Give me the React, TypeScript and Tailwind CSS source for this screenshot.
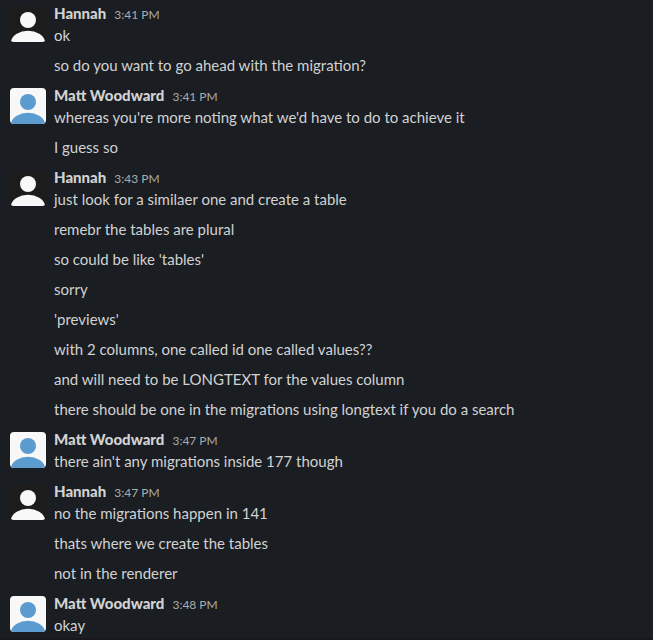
type Group = { author: string; time: string; lines: string[] };

const groups: Group[] = [
  { author: "Hannah", time: "3:41 PM", lines: ["ok", "so do you want to go ahead with the migration?"] },
  { author: "Matt Woodward", time: "3:41 PM", lines: ["whereas you're more noting what we'd have to do to achieve it", "I guess so"] },
  {
    author: "Hannah",
    time: "3:43 PM",
    lines: [
      "just look for a similaer one and create a table",
      "remebr the tables are plural",
      "so could be like 'tables'",
      "sorry",
      "'previews'",
      "with 2 columns, one called id one called values??",
      "and will need to be LONGTEXT for the values column",
      "there should be one in the migrations using longtext if you do a search",
    ],
  },
  { author: "Matt Woodward", time: "3:47 PM", lines: ["there ain't any migrations inside 177 though"] },
  { author: "Hannah", time: "3:47 PM", lines: ["no the migrations happen in 141", "thats where we create the tables", "not in the renderer"] },
  { author: "Matt Woodward", time: "3:48 PM", lines: ["okay"] },
];

function Avatar({ light }: { light: boolean }) {
  return (
    <svg
      viewBox="0 0 36 36"
      aria-hidden="true"
      className={light ? "mt-1 size-9 shrink-0 rounded bg-[#f8f8f8] text-[#5b9bd0]" : "mt-1 size-9 shrink-0 rounded bg-[#1d1c1d] text-[#f8f8f8]"}
    >
      <circle cx="18" cy="14" r="8" fill="currentColor" />
      <path d="M2 36Q1 36 1 35A17.2 12 0 0 1 35 35Q35 36 34 36Z" fill="currentColor" />
    </svg>
  );
}

function MessageGroup({ author, time, lines }: Group) {
  return (
    <article className="flex gap-2 px-2.5 pb-1.5 pt-0.5 last:pb-0">
      <Avatar light={author !== "Hannah"} />
      <div className="min-w-0 flex-1">
        <header className="flex h-[22px] items-baseline gap-2 leading-[22px]">
          <span className="text-[15px] font-black">{author}</span>
          <time className="text-xs text-[#ababad]">{time}</time>
        </header>
        <div className="flex flex-col gap-2">
          {lines.map((line) => (
            <p key={line} className="text-[15px] leading-[22px]">{line}</p>
          ))}
        </div>
      </div>
    </article>
  );
}

export default function App() {
  return (
    <main className="min-h-screen border-b-2 border-[#17171c] bg-[#1a1d21] font-['Lato','Liberation_Sans',sans-serif] text-[#d1d2d3]">
      {groups.map((group) => (
        <MessageGroup key={group.author + group.lines[0]} {...group} />
      ))}
    </main>
  );
}
